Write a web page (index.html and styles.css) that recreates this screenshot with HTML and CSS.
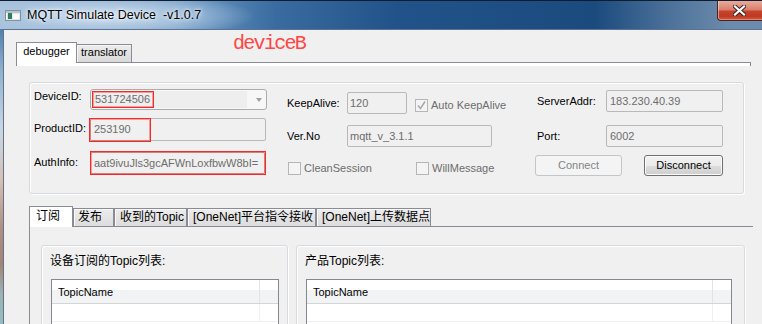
FILE: index.html
```html
<!DOCTYPE html>
<html lang="zh-CN">
<head>
    <meta charset="UTF-8">
    <meta name="viewport" content="width=device-width, initial-scale=1.0">
    <title>MQTT Simulate Device -v1.0.7</title>
    <link rel="stylesheet" href="styles.css">
</head>
<body>
<div class="window">
    <div class="titlebar">
        <svg class="app-icon" width="16" height="11" viewBox="0 0 16 11">
            <rect x="0.5" y="0.5" width="15" height="10" fill="#dfe5ea" stroke="#85909a"/>
            <rect x="1" y="1" width="14" height="2" fill="#b7c2cc"/>
            <rect x="1" y="3" width="1" height="7" fill="#ffffff"/>
            <rect x="3" y="3" width="4" height="6" fill="#2f7d60"/>
            <rect x="8" y="4" width="6" height="5" fill="#f7f9fa"/>
        </svg>
        <span class="title">MQTT Simulate Device  -v1.0.7</span>
        <div class="close-btn">
            <svg width="13" height="11" viewBox="0 0 13 11">
                <path d="M2 1.5 L11 9.5 M11 1.5 L2 9.5" stroke="#3b2624" stroke-width="4.2" stroke-linecap="square"/>
                <path d="M2 1.5 L11 9.5 M11 1.5 L2 9.5" stroke="#ffffff" stroke-width="2.2" stroke-linecap="square"/>
            </svg>
        </div>
    </div>
    <div class="frame">
        <div class="frame-edge"></div>
        <div class="client">
            <span class="note">deviceB</span>

            <div class="tabbar">
                <div class="tab active tab-debugger">debugger</div>
                <div class="tab tab-translator">translator</div>
            </div>
            <div class="pane">
                <div class="pane-lip"></div>
                <div class="pane-body">
                    <div class="conn-box">
                        <!-- device ids -->
                        <div class="col col-id">
                            <div class="row">
                                <span class="label label-id">DeviceID:</span>
                                <div class="combo">
                                    <span class="combo-edit">531724506</span>
                                    <span class="combo-arrow"></span>
                                    <span class="mark mark-device"></span>
                                </div>
                            </div>
                            <div class="row row-product">
                                <span class="label label-id label-low">ProductID:</span>
                                <div class="field field-product">253190
                                    <span class="mark mark-product"></span>
                                </div>
                            </div>
                            <div class="row row-auth">
                                <span class="label label-id label-low">AuthInfo:</span>
                                <div class="field field-auth">aat9ivuJls3gcAFWnLoxfbwW8bI=
                                    <span class="mark mark-auth"></span>
                                </div>
                            </div>
                        </div>

                        <!-- keepalive / version -->
                        <div class="col col-mid">
                            <div class="row row-c">
                                <span class="label label-mid">KeepAlive:</span>
                                <div class="field field-keep">120</div>
                                <div class="check check-auto">
                                    <span class="cb">
                                        <svg width="11" height="11" viewBox="0 0 11 11"><path d="M2 5.5 L4.5 8.5 L9 1.5" fill="none" stroke="#a6a6a6" stroke-width="1.4"/></svg>
                                    </span>
                                    Auto KeepAlive
                                </div>
                            </div>
                            <div class="row row-c row-ver">
                                <span class="label label-mid">Ver.No</span>
                                <div class="field field-ver">mqtt_v_3.1.1</div>
                            </div>
                            <div class="row row-c row-checks">
                                <div class="check check-clean"><span class="cb"></span>CleanSession</div>
                                <div class="check"><span class="cb"></span>WillMessage</div>
                            </div>
                        </div>

                        <!-- server -->
                        <div class="col col-srv">
                            <div class="row row-c">
                                <span class="label label-srv">ServerAddr:</span>
                                <div class="field field-srv">183.230.40.39</div>
                            </div>
                            <div class="row row-c row-port">
                                <span class="label label-srv">Port:</span>
                                <div class="field field-srv">6002</div>
                            </div>
                            <div class="row row-c row-buttons">
                                <button class="btn btn-connect" disabled>Connect</button>
                                <button class="btn btn-disconnect">Disconnect</button>
                            </div>
                        </div>
                    </div>

                    <div class="subtabs">
                        <div class="stab active st-1">订阅</div>
                        <div class="stab st-2">发布</div>
                        <div class="stab st-3">收到的Topic</div>
                        <div class="stab st-4">[OneNet]平台指令接收</div>
                        <div class="stab st-5">[OneNet]上传数据点</div>
                    </div>
                    <div class="subpane">
                        <div class="listgroup listgroup-dev">
                            <div class="listgroup-title">设备订阅的Topic列表:</div>
                            <div class="list list-dev">
                                <div class="list-head">
                                    <div class="list-col">TopicName</div>
                                </div>
                                <div class="list-row">
                                    <div class="list-cell"></div>
                                </div>
                            </div>
                        </div>
                        <div class="listgroup listgroup-prod">
                            <div class="listgroup-title">产品Topic列表:</div>
                            <div class="list list-prod">
                                <div class="list-head">
                                    <div class="list-col">TopicName</div>
                                </div>
                                <div class="list-row">
                                    <div class="list-cell"></div>
                                </div>
                            </div>
                        </div>
                    </div>
                </div>
            </div>
        </div>
    </div>
</div>
</body>
</html>
```

FILE: styles.css
```css
* {
    box-sizing: border-box;
}
body {
    margin: 0;
    width: 762px;
    height: 324px;
    overflow: hidden;
    font-family: "Liberation Sans", Arial, "Noto Sans CJK SC", sans-serif;
    font-size: 11px;
    color: #000;
    background: #f0f0f0;
}
.window {
    width: 762px;
    height: 324px;
    display: flex;
    flex-direction: column;
}

/* title bar */
.titlebar {
    height: 29px;
    flex: none;
    display: flex;
    align-items: flex-start;
    border-top: 1px solid #0f1d2e;
    background:
        radial-gradient(ellipse 150px 24px at 105px 15px, rgba(214,228,242,0.9) 0%, rgba(180,204,228,0.7) 55%, rgba(120,160,200,0) 100%),
        linear-gradient(90deg, #a3bfd9 0%, #6e9ac4 24%, #3a6ca1 36%, #21538a 52%, #1b4a7e 78%, #4d729a 88%, #6d8cad 96%, #6d8cad 100%);
}
.app-icon {
    flex: none;
    margin: 9px 0 0 5px;
}
.title {
    margin: 7px 0 0 6px;
    font-size: 12.5px;
    line-height: 15px;
    white-space: pre;
    text-shadow: 0 0 6px #fff, 0 0 3px #fff;
}
.close-btn {
    margin-left: auto;
    width: 45px;
    height: 20px;
    flex: none;
    display: flex;
    align-items: center;
    justify-content: center;
    padding-right: 2px;
    border: 1px solid #4b211c;
    border-top: none;
    border-right: none;
    border-radius: 0 0 0 4px;
    background: linear-gradient(#e9ab9e 0%, #d9806c 45%, #c5432c 55%, #c03823 80%, #d65a3c 100%);
    box-shadow: inset 1px 0 0 rgba(255,255,255,0.45), inset 0 -1px 0 rgba(255,255,255,0.3);
}

/* window frame */
.frame {
    flex: 1;
    display: flex;
    min-height: 0;
}
.frame-edge {
    width: 3px;
    flex: none;
    background: linear-gradient(180deg, #4f7fae 0px, #8fb0cc 40px, #c9d7e2 100px, #d8c0b4 150px, #b08e80 200px, #a48474 235px, #9fb2b0 265px, #96bcc0 295px);
}
.client {
    flex: 1;
    position: relative;
    border-top: 1px solid #5d7390;
    border-left: 1px solid #5d7390;
    background: #f0f0f0;
    overflow: hidden;
}
.note {
    position: absolute;
    left: 229px;
    top: 4px;
    font-family: "Liberation Mono", "Courier New", monospace;
    font-size: 20px;
    line-height: 20px;
    letter-spacing: -1.7px;
    color: #ff4646;
}

/* top tabs */
.tabbar {
    display: flex;
    align-items: flex-end;
    height: 20px;
    margin: 12px 0 0 12px;
}
.tab {
    height: 18px;
    border: 1px solid #898c95;
    border-bottom: none;
    background: linear-gradient(#ececec, #d9d9d9);
    box-shadow: inset 1px 1px 0 #f6f6f6;
    line-height: 15px;
    text-align: center;
}
.tab-debugger {
    width: 61px;
}
.tab-translator {
    width: 56px;
    margin-left: -1px;
}
.tab.active {
    height: 21px;
    margin-bottom: -1px;
    background: #fff;
    box-shadow: none;
    line-height: 17px;
    position: relative;
    z-index: 1;
}
.pane {
    margin: 0 11px 0 12px;
    border-top: 1px solid #898c95;
}
.pane-lip {
    height: 3px;
    background: #fff;
    border-left: 1px solid #898c95;
    border-right: 1px solid #898c95;
}
.pane-body {
    padding: 16px 7px 0 13px;
}

/* connection group */
.conn-box {
    height: 112px;
    display: flex;
    align-items: flex-start;
    border: 1px solid #d5dadf;
    border-radius: 3px;
    box-shadow: inset 1px 1px 0 #fff, 1px 1px 0 #fff;
}
.row {
    display: flex;
    align-items: flex-start;
}
.row-c {
    align-items: center;
}
.label {
    flex: none;
    line-height: 14px;
}
.label-id {
    width: 56px;
}
.label-low {
    padding-top: 3px;
}
.label-mid {
    width: 60px;
}
.label-srv {
    width: 69px;
}
.col-id {
    margin: 6px 0 0 4px;
    width: 233px;
}
.col-mid {
    margin: 9px 0 0 20px;
    width: 220px;
}
.col-srv {
    margin: 7px 0 0 30px;
}
.row-product {
    margin-top: 8px;
}
.row-auth {
    margin-top: 11px;
}
.row-ver {
    margin-top: 11px;
}
.row-checks {
    margin-top: 14px;
    padding-left: 1px;
}
.row-port {
    margin-top: 13px;
}
.row-buttons {
    margin-top: 8px;
}

.field {
    position: relative;
    height: 22px;
    border: 1px solid #b9b9b9;
    border-radius: 2px;
    background: #f0f0f0;
    color: #6d6d6d;
    padding-left: 3px;
    line-height: 20px;
    white-space: nowrap;
}
.field-product {
    width: 176px;
    height: 23px;
    line-height: 21px;
}
.field-auth {
    width: 175px;
}
.field-keep {
    width: 60px;
    padding-left: 2px;
}
.field-ver {
    width: 145px;
    padding-left: 2px;
}
.field-srv {
    width: 117px;
}

.combo {
    position: relative;
    width: 177px;
    height: 21px;
    display: flex;
    align-items: center;
    border: 1px solid #acacac;
    border-radius: 3px;
    background: #f7f7f7;
}
.combo-edit {
    margin-left: 1px;
    width: 155px;
    height: 17px;
    padding-left: 3px;
    background: #eeeeee;
    color: #6d6d6d;
    line-height: 17px;
}
.combo-arrow {
    margin: 1px 4px 0 auto;
    width: 0;
    height: 0;
    border-left: 3.5px solid transparent;
    border-right: 3.5px solid transparent;
    border-top: 4px solid #a0a0a0;
}

/* red annotation boxes drawn over the fields */
.mark {
    position: absolute;
    border: 1px solid #f22a2a;
    box-shadow: inset 0 0 0 1px rgba(240, 60, 60, 0.45);
}
.mark-device {
    left: 1px;
    top: 1px;
    width: 62px;
    height: 17px;
}
.mark-product {
    left: -2px;
    top: -1px;
    width: 62px;
    height: 24px;
}
.mark-auth {
    left: -1px;
    top: -2px;
    width: 176px;
    height: 24px;
}

.check {
    display: flex;
    align-items: center;
    color: #6d6d6d;
    line-height: 14px;
}
.check-auto {
    margin: 4px 0 0 8px;
}
.check-clean {
    width: 128px;
}
.cb {
    width: 13px;
    height: 13px;
    margin-right: 3px;
    display: flex;
    align-items: center;
    justify-content: center;
    border: 1px solid #b6b6b6;
    background: #f4f4f4;
}

.btn {
    height: 21px;
    padding: 0;
    border-radius: 3px;
    font: inherit;
    line-height: 19px;
    text-align: center;
}
.btn-connect {
    width: 87px;
    margin-left: -2px;
    border: 1px solid #c2c6c9;
    background: #f4f4f4;
    color: #838383;
}
.btn-disconnect {
    width: 79px;
    margin-left: 22px;
    border: 1px solid #707070;
    color: #000;
    background: linear-gradient(#f2f2f2 0%, #ebebeb 50%, #dddddd 50%, #cfcfcf 100%);
    box-shadow: inset 0 0 0 1px #fbfbfb;
}

/* lower tabs */
.subtabs {
    display: flex;
    align-items: flex-end;
    height: 20px;
    margin-top: 12px;
    font-size: 12px;
}
.stab {
    height: 18px;
    border: 1px solid #898c95;
    border-bottom: none;
    background: linear-gradient(#ededed, #dcdcdc);
    box-shadow: inset 1px 1px 0 #f8f8f8;
    line-height: 17px;
    white-space: nowrap;
    padding-left: 5px;
}
.stab.active {
    height: 21px;
    margin-bottom: -1px;
    background: #fff;
    box-shadow: none;
    line-height: 18px;
    position: relative;
    z-index: 1;
}
.st-1 {
    width: 44px;
    padding-left: 6px;
}
.st-2 {
    width: 41px;
    padding-left: 4px;
}
.st-3 {
    width: 73px;
}
.st-4 {
    width: 129px;
}
.st-5 {
    width: 115px;
}
.subpane {
    width: 724px;
    height: 110px;
    display: flex;
    align-items: flex-start;
    gap: 8px;
    padding: 18px 0 0 11px;
    border-top: 1px solid #898c95;
    border-left: 1px solid #898c95;
}
.listgroup {
    height: 100px;
    padding: 7px 0 0 9px;
    border: 1px solid #d5dadf;
    border-radius: 3px;
    box-shadow: inset 1px 1px 0 #fff, 1px 1px 0 #fff;
}
.listgroup-dev {
    width: 247px;
}
.listgroup-prod {
    width: 449px;
}
.listgroup-title {
    margin-left: -1px;
    font-size: 12px;
    line-height: 16px;
}
.list {
    margin-top: 10px;
    height: 60px;
    border: 1px solid #828790;
    background: #fff;
}
.list-dev {
    width: 228px;
}
.list-prod {
    width: 426px;
}
.list-head {
    display: flex;
    height: 24px;
    border-bottom: 1px solid #d5d5d5;
    background: linear-gradient(#fff 0%, #fff 45%, #f2f3f5 45%, #f2f3f5 100%);
}
.list-col,
.list-cell {
    border-right: 1px solid #e2e3e5;
}
.list-col {
    padding: 2px 0 0 6px;
    line-height: 21px;
}
.list-row {
    display: flex;
    height: 18px;
    border-bottom: 1px solid #f0f0f0;
}
.list-cell {
    border-right-color: #f0f0f0;
}
.list-dev .list-col,
.list-dev .list-cell {
    width: 208px;
}
.list-prod .list-col,
.list-prod .list-cell {
    width: 406px;
}
```
